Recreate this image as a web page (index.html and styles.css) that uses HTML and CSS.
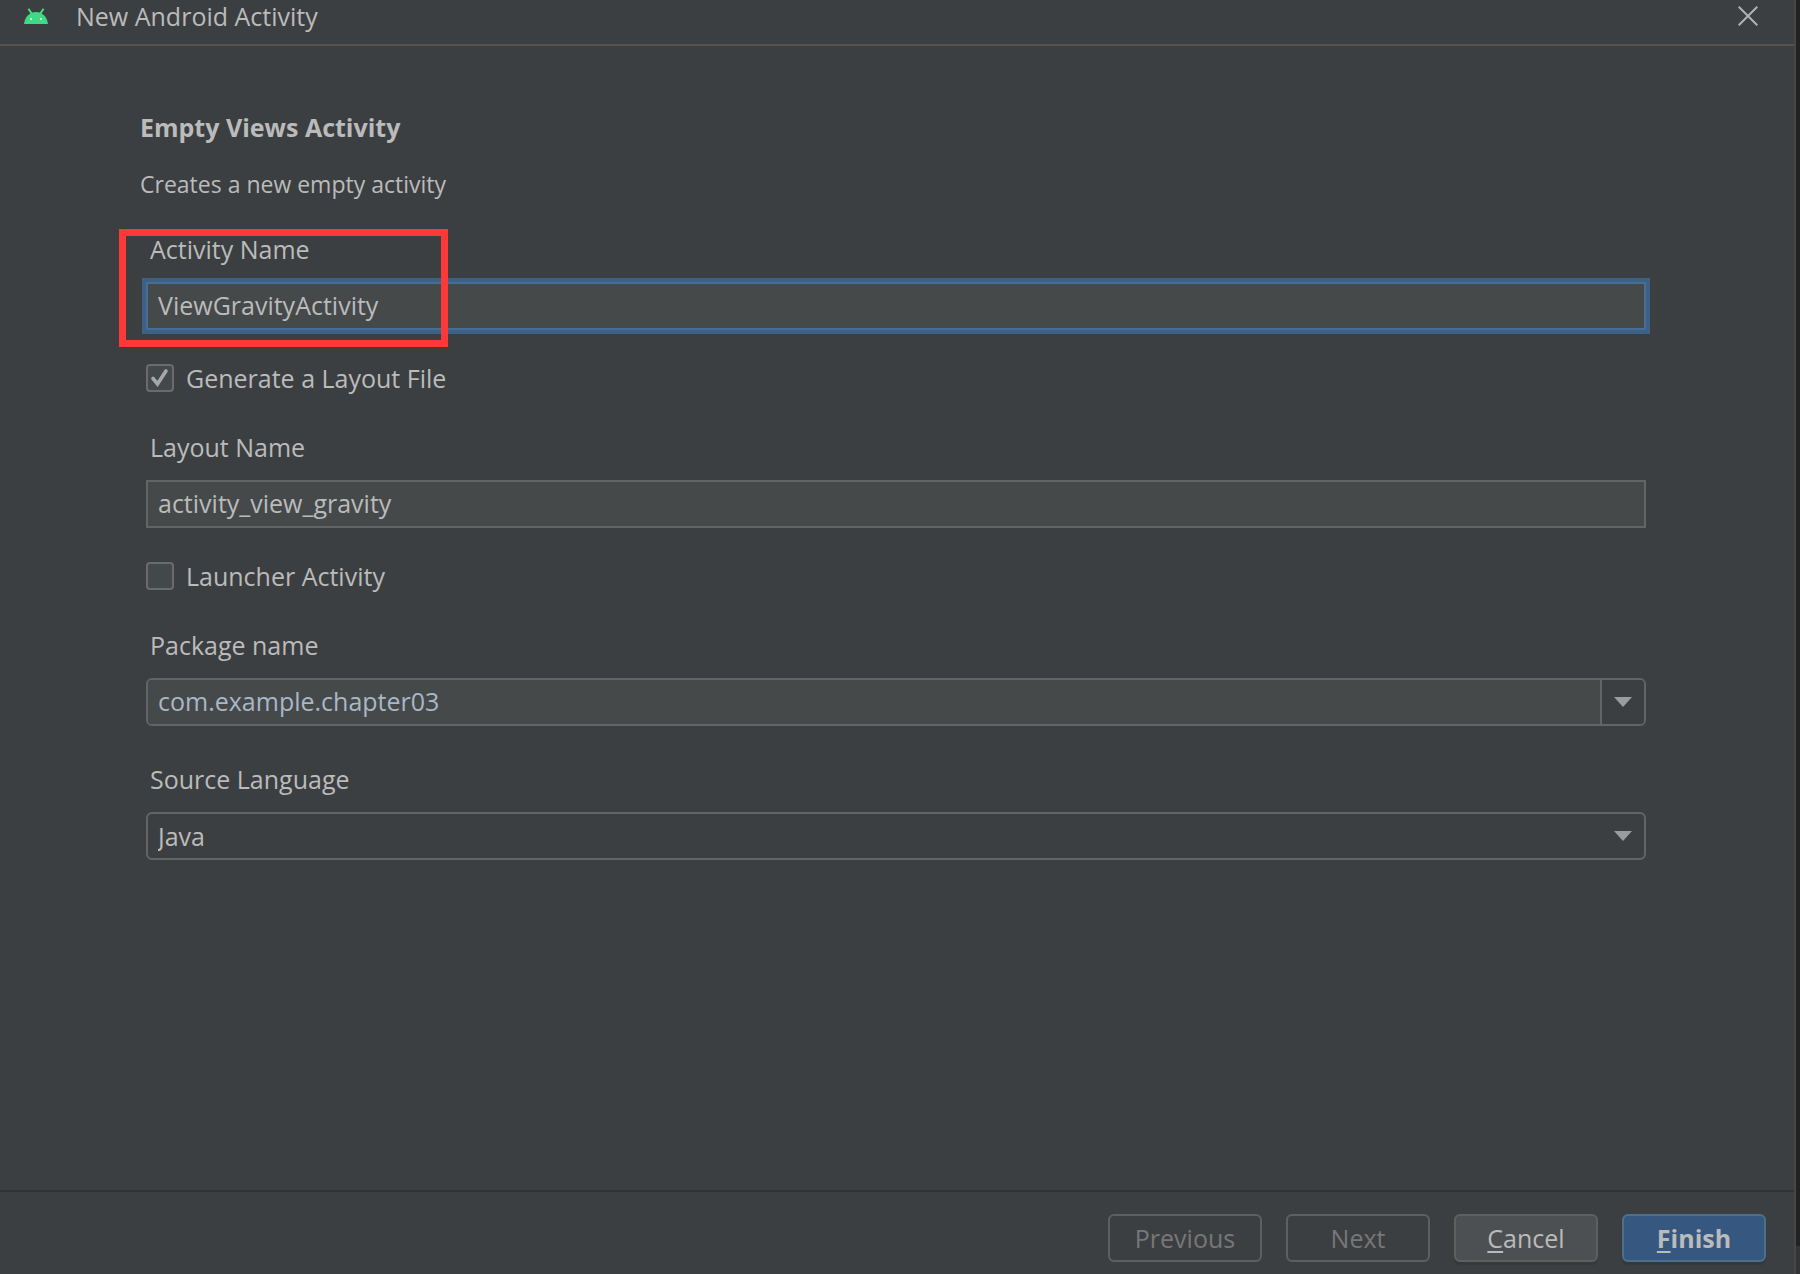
FILE: index.html
```html
<!DOCTYPE html>
<html lang="en">
<head>
<meta charset="utf-8">
<title>New Android Activity</title>
<link rel="stylesheet" href="styles.css">
</head>
<body>
<div class="dialog">
  <header class="titlebar">
    <svg class="logo" width="24" height="16" viewBox="0 0 24 16" aria-hidden="true">
      <path d="M0 16C.6 11 3 7.200 6.400 5.400L3.600 1.200 5.200.2 8.200 4.600C10.500 3.800 13.500 3.800 15.800 4.600L18.800.2 20.400 1.200 17.600 5.400C21 7.200 23.400 11 24 16Z" fill="#3ddc84"/>
      <circle cx="7" cy="11" r="1" fill="#fff"/>
      <circle cx="17" cy="11" r="1" fill="#fff"/>
    </svg>
    <h1 class="title">New Android Activity</h1>
    <button class="close" type="button" aria-label="Close">
      <svg width="20" height="20" viewBox="0 0 20 20" aria-hidden="true"><path d="M.7.7 19.300 19.300M19.300.7.7 19.300" stroke="#afb1b3" stroke-width="2"/></svg>
    </button>
  </header>
  <form class="wizard">
    <main class="content">
      <h2 class="heading">Empty Views Activity</h2>
      <p class="description">Creates a new empty activity</p>
      <div class="field highlighted">
        <label class="label" for="activity">Activity Name</label>
        <input class="text focused" id="activity" type="text" value="ViewGravityActivity">
      </div>
      <div class="check">
        <input class="box" id="generate" type="checkbox" checked>
        <label for="generate">Generate a Layout File</label>
      </div>
      <div class="field">
        <label class="label" for="layout">Layout Name</label>
        <input class="text" id="layout" type="text" value="activity_view_gravity">
      </div>
      <div class="check">
        <input class="box" id="launcher" type="checkbox">
        <label for="launcher">Launcher Activity</label>
      </div>
      <div class="field">
        <label class="label" for="package">Package name</label>
        <div class="combo">
          <input class="combo-text" id="package" type="text" value="com.example.chapter03">
          <button class="combo-button" type="button" aria-label="Show packages">
            <svg width="18" height="10" viewBox="0 0 18 10" aria-hidden="true"><path d="M0 0H18L9 10Z" fill="#9a9da0"/></svg>
          </button>
        </div>
      </div>
      <div class="field">
        <label class="label" for="language">Source Language</label>
        <select class="select" id="language"><option>Java</option><option>Kotlin</option></select>
      </div>
    </main>
    <footer class="actions">
      <button class="button wide" type="button" disabled>Previous</button>
      <button class="button" type="button" disabled>Next</button>
      <button class="button" type="button"><span class="key">C</span>ancel</button>
      <button class="button primary" type="submit"><span class="key">F</span>inish</button>
    </footer>
  </form>
</div>
</body>
</html>
```
FILE: styles.css
```css
*, *::after { box-sizing: border-box; }

body {
  margin: 0;
  min-height: 100vh;
  display: flex;
  padding-right: 4px;
  background: linear-gradient(to top, #323436 28px, #222 28px);
  color: #bbb;
  font: 25px/36px "Open Sans", "Noto Sans", sans-serif;
}

button, input, select { font: inherit; color: inherit; margin: 0; }

.dialog {
  flex: 1;
  display: flex;
  flex-direction: column;
  background: #3c3f41;
  border-right: 2px solid #474747;
}

.titlebar {
  display: flex;
  align-items: center;
  height: 46px;
  padding: 0 36px 12px 24px;
  border-bottom: 2px solid #555250;
}

.title { flex: 1; margin: 0 0 0 28px; font-size: 25px; font-weight: 400; }

.close { display: flex; padding: 0; border: 0; background: none; }

.wizard { flex: 1; display: flex; flex-direction: column; }

.content { flex: 1; padding: 63px 148px 48px 146px; }

.heading { margin: 0 0 21px -6px; font-size: 25px; font-weight: 700; }

.description { margin: 0 0 29px -6px; font-size: 23px; }

.field { position: relative; display: flex; flex-direction: column; margin-bottom: 30px; }

.field + .field { margin-top: 35px; }

.label { align-self: flex-start; margin: 0 0 15px 4px; }

.text {
  width: 100%;
  height: 48px;
  padding: 0 10px 2px;
  border: 2px solid #646464;
  border-radius: 0;
  background: #45494a;
  outline: 0;
}

.focused { border-color: #466d94; box-shadow: 0 0 0 4px #3d6185; }

/* red marker around the name that has to be typed */
.highlighted::after {
  content: "";
  position: absolute;
  top: -2px;
  left: -27px;
  width: 329px;
  height: 118px;
  border: 7px solid #fc3838;
  pointer-events: none;
}

.check { display: flex; align-items: center; gap: 12px; margin-bottom: 33px; }

.box {
  appearance: none;
  width: 28px;
  height: 28px;
  border: 2px solid #6b6b6b;
  border-radius: 4px;
  background: #43494a;
}

.box:checked {
  background: #43494a url("data:image/svg+xml,%3Csvg xmlns='http://www.w3.org/2000/svg' viewBox='0 0 24 24'%3E%3Cpath d='M5 12.500 9.500 18 18 5' fill='none' stroke='%23a7a7a7' stroke-width='3.600' stroke-linecap='round'/%3E%3C/svg%3E") center / 24px 24px no-repeat;
}

.combo {
  display: flex;
  height: 48px;
  border: 2px solid #646464;
  border-radius: 6px;
  overflow: hidden;
}

.combo-text {
  flex: 1;
  min-width: 0;
  padding: 0 10px 2px;
  border: 0;
  outline: 0;
  background: #45494a;
  color: #a9b7c6;
}

.combo-button {
  display: flex;
  align-items: center;
  justify-content: center;
  width: 44px;
  padding: 0;
  border: 0;
  border-left: 2px solid #646464;
  background: #3c3f41;
}

.select {
  appearance: none;
  width: 100%;
  height: 48px;
  padding: 0 10px;
  border: 2px solid #646464;
  border-radius: 6px;
  background: #3c3f41 url("data:image/svg+xml,%3Csvg xmlns='http://www.w3.org/2000/svg' viewBox='0 0 18 10'%3E%3Cpath d='M0 0H18L9 10Z' fill='%239a9da0'/%3E%3C/svg%3E") right 12px center / 18px 10px no-repeat;
}

.actions {
  display: flex;
  justify-content: flex-end;
  gap: 24px;
  padding: 22px 28px 12px;
  border-top: 2px solid #323232;
}

.button {
  width: 144px;
  height: 48px;
  padding: 0;
  border: 2px solid #5e6060;
  border-radius: 6px;
  background: #4c5052;
  box-shadow: 0 3px 1px #36393a;
}

.wide { width: 154px; }

.button:disabled { background: none; box-shadow: none; color: #777; }

.primary { background: #365880; border-color: #4c708c; font-weight: 700; }

.key {
  text-decoration: underline;
  text-decoration-thickness: 2px;
  text-underline-offset: 3px;
}
```
